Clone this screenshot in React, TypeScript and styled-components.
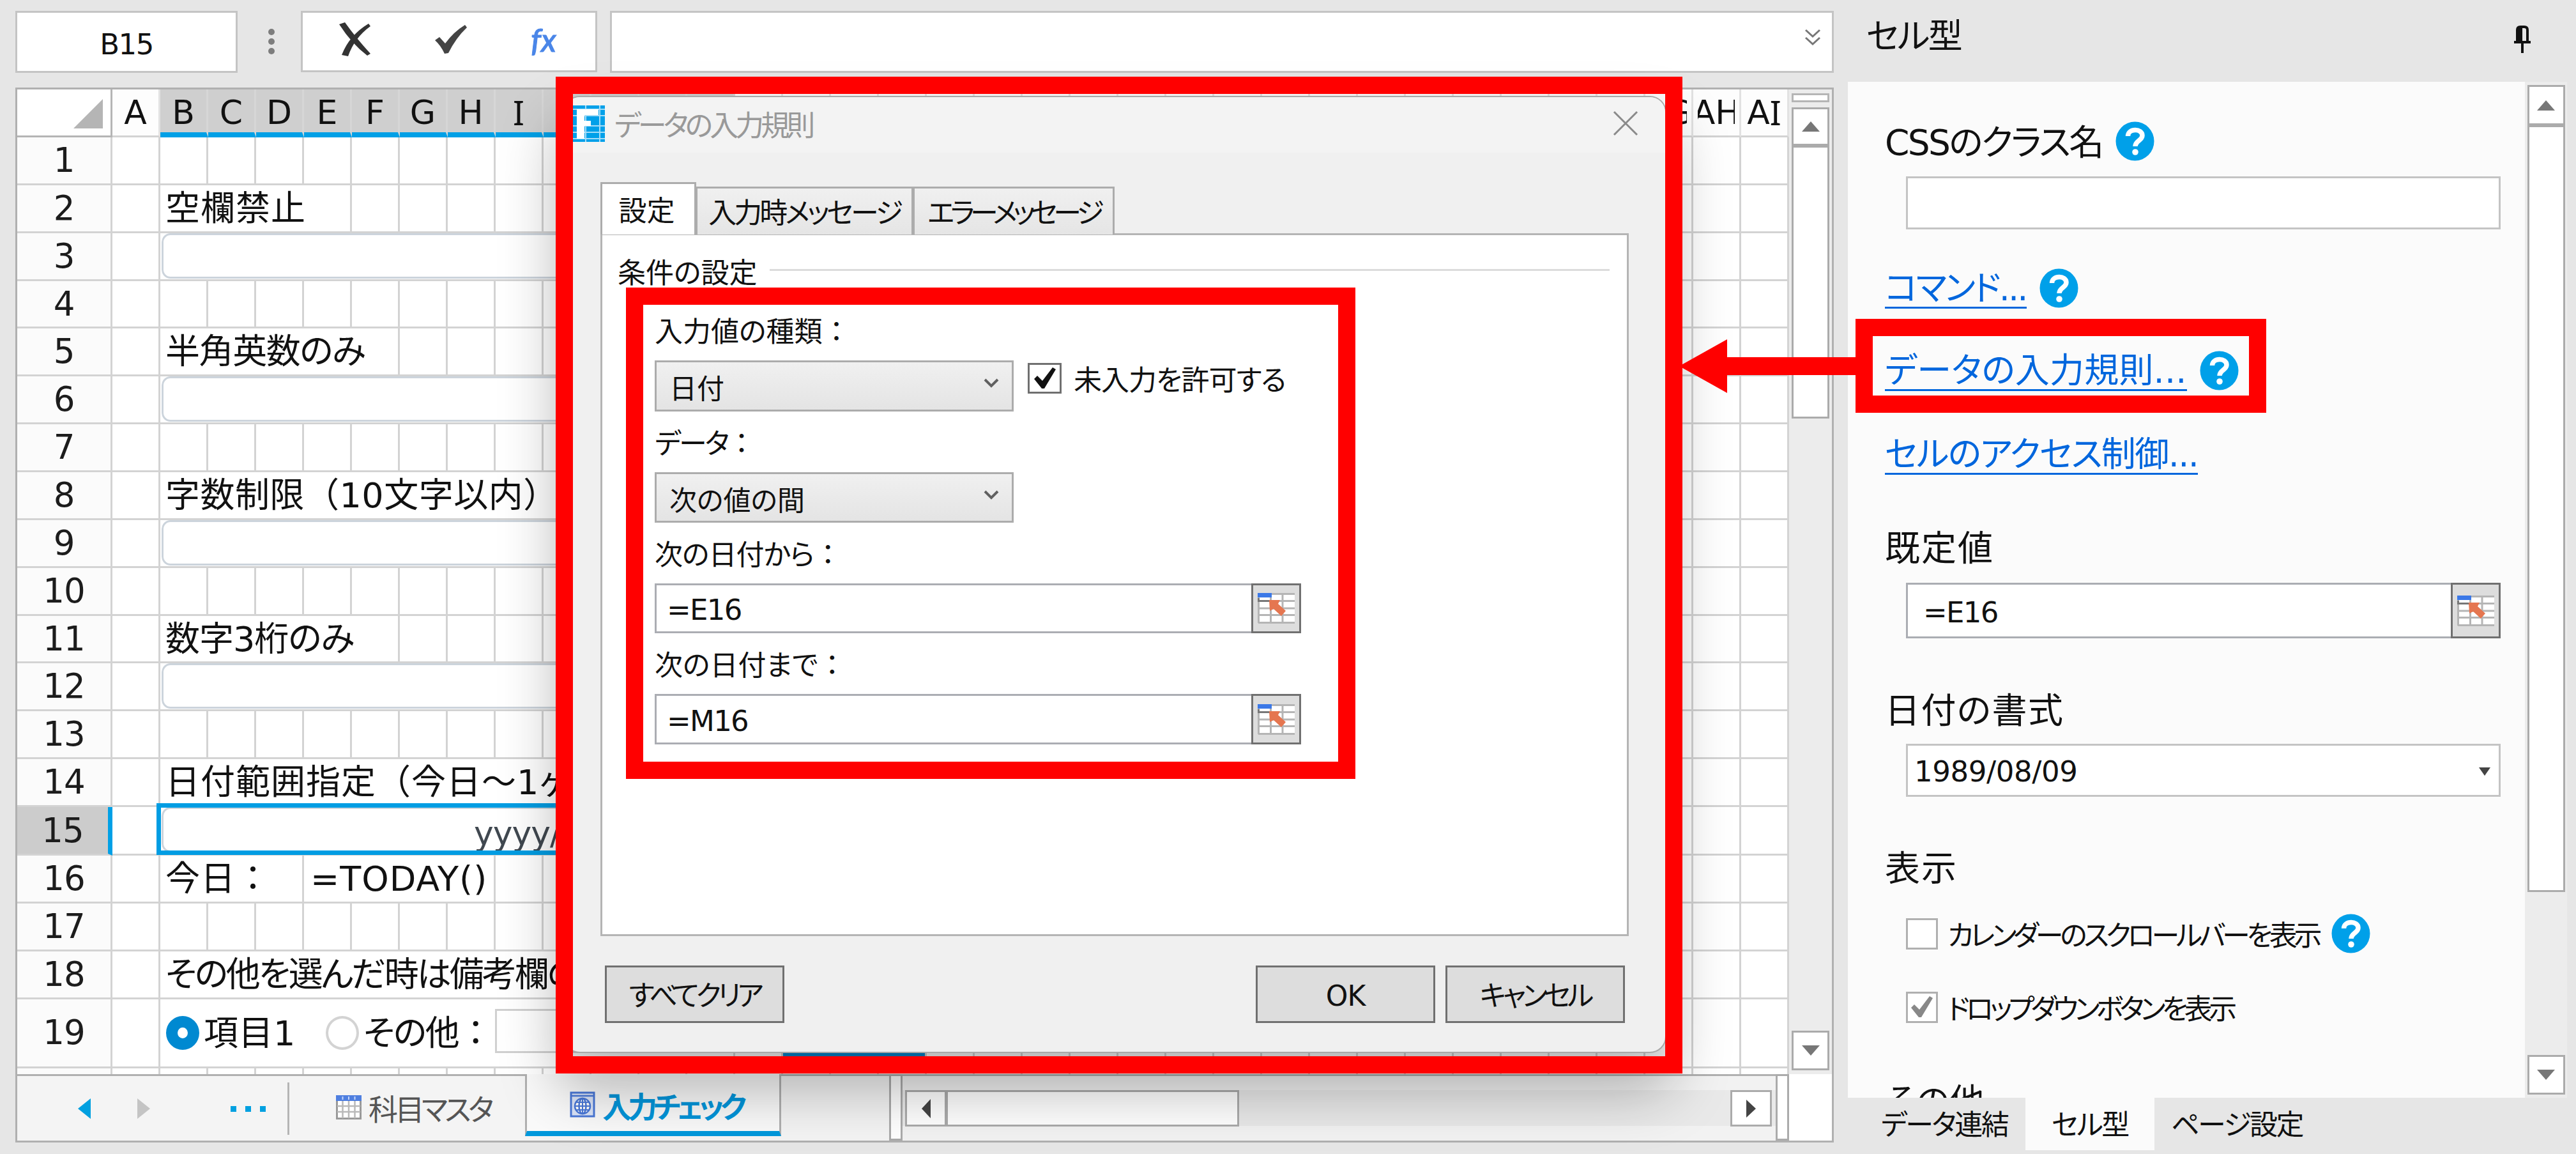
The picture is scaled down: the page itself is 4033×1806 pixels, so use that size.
import { Fragment, type ReactNode } from "react";
import styled, { createGlobalStyle, css } from "styled-components";

const GlobalStyle = createGlobalStyle`
  * { box-sizing: border-box; }
  body {
    margin: 0;
    background: #e6e6e6;
    font-family: "DejaVu Sans", "Noto Sans CJK JP", sans-serif;
    font-feature-settings: "palt";
    color: #111;
  }
`;

/* full-width punctuation keeps its whole em box */
const Wide = styled.span`
  font-feature-settings: "palt" 0;
`;

/* ---------- data ---------- */

type CellDef = { span: number; content?: ReactNode };

// J to AF sit behind the dialog and carry no label
const COLUMNS = [..."ABCDEFGHI", ...Array(23).fill(""), "AG", "AH", "AI"];

const rowCells: Record<number, CellDef[]> = {
  2: [{ span: 4, content: <CellText track={1}>空欄禁止</CellText> }],
  3: [{ span: 12, content: <CellInput /> }],
  5: [{ span: 5, content: <CellText track={-1.4}>半角英数のみ</CellText> }],
  6: [{ span: 12, content: <CellInput /> }],
  8: [{
    span: 9,
    content: <CellText track={0.5}>字数制限<Wide>（</Wide>10文字以内<Wide>）</Wide></CellText>,
  }],
  9: [{ span: 12, content: <CellInput /> }],
  11: [{ span: 5, content: <CellText track={-1}>数字3桁のみ</CellText> }],
  12: [{ span: 12, content: <CellInput /> }],
  14: [{
    span: 12,
    content: <CellText track={1}>日付範囲指定<Wide>（</Wide>今日～1ヶ月</CellText>,
  }],
  15: [{ span: 12, content: <CellInput>yyyy/</CellInput> }],
  16: [
    { span: 3, content: <CellText track={1}>今日<Wide>：</Wide></CellText> },
    { span: 4, content: <CellText track={1} indent={2}>=TODAY()</CellText> },
    { span: 1 },
    { span: 4, content: <CellText indent={2}>：</CellText> },
  ],
  18: [{ span: 12, content: <CellText track={-3}>その他を選んだ時は備考欄の</CellText> }],
  19: [
    { span: 12, content: <OptionRow /> },
    { span: 1 },
    { span: 3, content: <SubmitButton /> },
  ],
};

/* ---------- page ---------- */

export default function App() {
  return (
    <>
      <GlobalStyle />
      <Page>
        <Workspace>
          <FormulaBar />
          <SheetFrame>
            <SheetTop>
              <Grid />
              <VBar>
                <SplitBox />
                <ArrowBox $h={60}><Triangle dir="up" /></ArrowBox>
                <VThumb $h={427} />
                <Spring />
                <ArrowBox $h={62}><Triangle dir="down" /></ArrowBox>
              </VBar>
            </SheetTop>
            <SheetTabs />
          </SheetFrame>
        </Workspace>
        <SidePanel />
        <Dialog />
        <OuterFrame />
        <LinkFrame />
        <ArrowSvg width="290" height="84" viewBox="0 0 290 84">
          <path d="M14 42 L89 0 V28 H290 V56 H89 V84 Z" fill="#f00" />
        </ArrowSvg>
      </Page>
    </>
  );
}

function FormulaBar() {
  return (
    <Bar>
      <NameBox>B15</NameBox>
      <Dots><i /><i /><i /></Dots>
      <BarButtons>
        <svg width="50" height="54" viewBox="0 0 50 54">
          <path d="M0 3 L9 0 Q26 24 49 49 L44 52 Q20 34 0 3Z" fill="#333" />
          <path d="M49 6 Q24 24 14 53 L4 51 Q16 20 46 2Z" fill="#333" />
        </svg>
        <svg width="52" height="46" viewBox="0 0 52 46">
          <path d="M1 24 L8 19 L17 29 Q30 11 48 0 L51 4 Q34 20 22 44 L16 45 Q10 32 1 24Z" fill="#444" />
        </svg>
        <FxMark>fx</FxMark>
      </BarButtons>
      <FormulaBox>
        <svg width="28" height="28" viewBox="0 0 28 28">
          <path d="M3 2 L14 12 L25 2 M3 14 L14 24 L25 14" fill="none" stroke="#777" strokeWidth="3" />
        </svg>
      </FormulaBox>
    </Bar>
  );
}

function Grid() {
  const rows = Array.from({ length: 20 }, (_, i) => i + 1);
  return (
    <GridBox>
      <Corner>
        <svg width="46" height="46" viewBox="0 0 46 46"><path d="M46 0 V46 H0 Z" fill="#b5b5b5" /></svg>
      </Corner>
      {COLUMNS.map((name, i) => (
        <ColHead key={i} $on={i >= 1 && i <= 12}>
          <span>{[...name].map((c, k) => (c === "I" ? <SerifI key={k}>I</SerifI> : c))}</span>
        </ColHead>
      ))}
      {rows.map((row) => {
        const defs = rowCells[row] || [];
        const used = defs.reduce((sum, d) => sum + d.span, 1);
        return (
          <Fragment key={row}>
            <RowHead $on={row === 15}>{row < 20 ? row : ""}</RowHead>
            <Cell $span={1} />
            {defs.map((d, i) => <Cell key={i} $span={d.span}>{d.content}</Cell>)}
            {Array.from({ length: 35 - used }, (_, i) => <Cell key={"e" + i} $span={1} />)}
          </Fragment>
        );
      })}
      <Selection />
    </GridBox>
  );
}

function CellText({ children, track = 0, indent = 0 }: { children: ReactNode; track?: number; indent?: number }) {
  return <CellLabel $track={track} $indent={indent}>{children}</CellLabel>;
}

function CellInput({ children }: { children?: ReactNode }) {
  return <RoundedInput>{children}</RoundedInput>;
}

function OptionRow() {
  return (
    <Options>
      <Radio $on />
      <OptionText $w={198} $track={0.5}>項目1</OptionText>
      <Radio />
      <OptionText $w={213} $track={-2}>その他<Wide>：</Wide></OptionText>
      <NoteBox />
    </Options>
  );
}

function SubmitButton() {
  return <SubmitFace />;
}

function SheetTabs() {
  return (
    <TabsBar>
      <Nav>
        <svg width="20" height="32" viewBox="0 0 20 32"><path d="M20 0 V32 L0 16Z" fill="#00a0e0" /></svg>
        <svg width="20" height="32" viewBox="0 0 20 32"><path d="M0 0 V32 L20 16Z" fill="#c4c4c4" /></svg>
        <More><i /><i /><i /></More>
        <NavRule />
      </Nav>
      <SheetTab>
        <svg width="40" height="38" viewBox="0 0 40 38">
          <rect x="1.5" y="1.5" width="37" height="35" fill="#fff" stroke="#999" strokeWidth="3" />
          <path d="M10.500 9 V36 M20 9 V36 M29.500 9 V36 M2 17 H38 M2 26 H38" stroke="#b9b9b9" strokeWidth="2.500" />
          <rect width="40" height="9" fill="#4f7fe0" />
          <path d="M10.500 2 V7 M20 2 V7 M29.500 2 V7" stroke="#c5d6fa" strokeWidth="2" />
        </svg>
        科目マスタ
      </SheetTab>
      <SheetTab $on>
        <svg width="40" height="41" viewBox="0 0 40 41">
          <rect x="2" y="2" width="36" height="37" fill="#dbe4f8" stroke="#4a78d8" strokeWidth="3" />
          <path d="M2 7 H38" stroke="#4a78d8" strokeWidth="2.500" />
          <circle cx="20" cy="23" r="12" fill="#fff" stroke="#4a78d8" strokeWidth="2.500" />
          <ellipse cx="20" cy="23" rx="5.500" ry="12" fill="none" stroke="#4a78d8" strokeWidth="2.500" />
          <path d="M20 11 V35 M8 23 H32 M10 17 H30 M10 29 H30" stroke="#4a78d8" strokeWidth="2" />
        </svg>
        入力チェック
      </SheetTab>
      <TabGap />
      <Splitter />
      <HBar>
        <HArrow><Triangle dir="left" /></HArrow>
        <HThumb />
        <Spring />
        <HArrow><Triangle dir="right" /></HArrow>
      </HBar>
      <Splitter />
      <TabsEnd />
    </TabsBar>
  );
}

function Triangle({ dir }: { dir: "up" | "down" | "left" | "right" }) {
  const shapes = {
    up: [28, 16, "M14 0 L28 16 H0Z", "#777"],
    down: [28, 16, "M0 0 H28 L14 16Z", "#777"],
    left: [14, 30, "M14 0 V30 L0 15Z", "#444"],
    right: [15, 28, "M0 0 V28 L15 14Z", "#444"],
  } as const;
  const [w, h, d, fill] = shapes[dir];
  return <svg width={w} height={h} viewBox={`0 0 ${w} ${h}`}><path d={d} fill={fill} /></svg>;
}

function Help() {
  return (
    <HelpIcon width="61" height="62" viewBox="0 0 61 62">
      <ellipse cx="30.500" cy="31" rx="30" ry="30.500" fill="#00a0e9" />
      <path d="M19.500 23 C19.500 10.500 42 10.500 42 22 C42 30 31 30 31 39" fill="none" stroke="#fff" strokeWidth="7.500" />
      <circle cx="31" cy="48" r="4.800" fill="#fff" />
    </HelpIcon>
  );
}

function RangePicker() {
  return (
    <PickerButton>
      <svg width="58" height="48" viewBox="0 0 58 48">
        <rect x="1" y="1" width="57" height="46" fill="#fff" />
        <path d="M1.500 1 V47 M20.500 1 V47 M39 1 V47 M1 1.500 H58 M1 12.500 H58 M1 24 H58 M1 34.500 H58 M1 46.500 H58" stroke="#b5b5b5" strokeWidth="3" />
        <path d="M1.500 8 V12.500 H22" fill="none" stroke="#777" strokeWidth="3" />
        <rect width="22" height="7" fill="#3b78e7" />
        <path d="M18 11 H35 L32 17 L44 28 L37 36 L25 25 L19 28Z" fill="#e57650" />
      </svg>
    </PickerButton>
  );
}

function Check({ color }: { color: string }) {
  return (
    <svg width="38" height="36" viewBox="0 0 38 36">
      <path d="M2 19 L7 14 L15 22 L31 1 L36 4 L18 34 L14 34Z" fill={color} />
    </svg>
  );
}

function Chevron() {
  return (
    <svg width="24" height="18" viewBox="0 0 24 18">
      <path d="M2 3 L12 13 L22 3" fill="none" stroke="#606060" strokeWidth="4" />
    </svg>
  );
}

/* ---------- dialog ---------- */

function Dialog() {
  return (
    <DialogBox>
      <TitleBar>
        <svg width="56" height="57" viewBox="0 0 56 57">
          <rect width="56" height="57" fill="#00a0e9" />
          <path d="M26 0 V57 M48 0 V57 M0 6 H56 M0 16 H56 M0 32 H56 M0 42 H56 M0 52 H56" stroke="#a5dcf7" strokeWidth="2" />
          <path d="M12 6 H46 V15 H24 V24 H34 V32 H24 V52 H12Z" fill="#fff" />
        </svg>
        <span>データの入力規則</span>
        <svg width="40" height="40" viewBox="0 0 40 40">
          <path d="M2 2 L38 38 M38 2 L2 38" stroke="#8a8a8a" strokeWidth="3" />
        </svg>
      </TitleBar>
      <DialogBody>
        <TabStrip>
          <Tab $on $w={150}>設定</Tab>
          <Tab $w={341} $track={-4}>入力時メッセージ</Tab>
          <Tab $w={316} $track={-6.6}>エラーメッセージ</Tab>
        </TabStrip>
        <TabPanel>
          <Legend>条件の設定</Legend>
          <Fields>
            <Label>入力値の種類<Wide>：</Wide></Label>
            <Line>
              <Select $h={80}>日付<Chevron /></Select>
              <AllowBlank>
                <DialogCheck><Check color="#111" /></DialogCheck>
                未入力を許可する
              </AllowBlank>
            </Line>
            <Label $track={-3}>データ<Wide>：</Wide></Label>
            <Select $h={79}>次の値の間<Chevron /></Select>
            <Label $track={-1}>次の日付から<Wide>：</Wide></Label>
            <RangeField $w={1012} $h={78}><span>=E16</span><RangePicker /></RangeField>
            <Label>次の日付まで<Wide>：</Wide></Label>
            <RangeField $w={1012} $h={79}><span>=M16</span><RangePicker /></RangeField>
          </Fields>
        </TabPanel>
        <Footer>
          <Button $track={-5.2}>すべてクリア</Button>
          <Spring />
          <Button $track={-1}>OK</Button>
          <Button $track={-5.2}>キャンセル</Button>
        </Footer>
      </DialogBody>
      <FieldsFrame />
    </DialogBox>
  );
}

/* ---------- right side ---------- */

function SidePanel() {
  return (
    <Side>
      <SideHead>
        <span>セル型</span>
        <svg width="26" height="43" viewBox="0 0 26 43">
          <path d="M5 25 V7 Q5 2 10 2 H16 Q21 2 21 7 V25 M0 26 H26 M13 26 V43" fill="none" stroke="#111" strokeWidth="4" />
          <path d="M5 3 H13 V26 H5Z" fill="#111" />
        </svg>
      </SideHead>
      <SideBody>
        <Props>
          <PropRow $top={62}><Heading $track={-2.6}>CSSのクラス名</Heading><Help /></PropRow>
          <PlainInput />
          <PropRow $top={61}><Link $track={-2.9}>コマンド...</Link><Help /></PropRow>
          <PropRow $top={67}><Link $track={0.2}>データの入力規則...</Link><Help /></PropRow>
          <PropRow $top={69}><Link $track={-1.6}>セルのアクセス制御...</Link></PropRow>
          <PropRow $top={83}><Heading $track={2}>既定値</Heading></PropRow>
          <RangeField $w={931} $h={87} $side><span>=E16</span><RangePicker /></RangeField>
          <PropRow $top={80}><Heading $track={1.5}>日付の書式</Heading></PropRow>
          <FormatSelect>
            1989/08/09
            <svg width="18" height="13" viewBox="0 0 18 13"><path d="M0 0 H18 L9 13Z" fill="#444" /></svg>
          </FormatSelect>
          <PropRow $top={79}><Heading $track={2}>表示</Heading></PropRow>
          <PropRow $top={42} $sub>
            <SideCheck />
            <SubText $track={-5.2}>カレンダーのスクロールバーを表示</SubText>
            <Help />
          </PropRow>
          <PropRow $top={53} $sub>
            <SideCheck><Check color="#888" /></SideCheck>
            <SubText $track={-5.6}>ドロップダウンボタンを表示</SubText>
          </PropRow>
          <PropRow $top={84}><Heading $track={-1}>その他</Heading></PropRow>
        </Props>
        <SideBar>
          <ArrowBox $h={63}><Triangle dir="up" /></ArrowBox>
          <VThumb $h={1200} />
          <Spring />
          <ArrowBox $h={62}><Triangle dir="down" /></ArrowBox>
        </SideBar>
      </SideBody>
      <SideTabs>
        <SideTab $w={278}>データ連結</SideTab>
        <SideTab $w={202} $on>セル型</SideTab>
        <SideTab $w={258}>ページ設定</SideTab>
      </SideTabs>
    </Side>
  );
}

/* ---------- styles: shell ---------- */

const Page = styled.div`
  position: relative;
  display: flex;
  width: 4033px;
  height: 1806px;
  overflow: hidden;
  background: #e6e6e6;
`;

const Workspace = styled.div`
  width: 2893px;
  flex: none;
  padding: 17px 22px 0 24px;
`;

const Spring = styled.div`
  flex: 1;
`;

const redFrame = css`
  position: absolute;
  border: 27px solid #f00;
`;

const OuterFrame = styled.div`
  ${redFrame}
  left: 870px;
  top: 120px;
  width: 1764px;
  height: 1560px;
`;

const LinkFrame = styled.div`
  ${redFrame}
  left: 2905px;
  top: 499px;
  width: 643px;
  height: 147px;
`;

const ArrowSvg = styled.svg`
  position: absolute;
  left: 2615px;
  top: 531px;
`;

const Bar = styled.div`
  display: flex;
  height: 97px;
`;

const box = css`
  border: 3px solid #c4c4c4;
  background: #fff;
`;

const NameBox = styled.div`
  ${box}
  width: 348px;
  padding-top: 6px;
  text-align: center;
  font-size: 45px;
  line-height: 88px;
  letter-spacing: -1.5px;
`;

const Dots = styled.div`
  display: flex;
  flex-direction: column;
  align-items: center;
  gap: 5px;
  width: 99px;
  padding: 28px 0 0 6px;

  i {
    width: 10px;
    height: 10px;
    border-radius: 50%;
    background: #7d7d7d;
  }
`;

const BarButtons = styled.div`
  ${box}
  display: flex;
  align-items: center;
  gap: 99px;
  width: 464px;
  height: 96px;
  padding: 0 0 6px 57px;
`;

const FxMark = styled.span`
  font: italic 500 50px Lato, sans-serif;
  -webkit-text-stroke: 1px #4a86e8;
  color: #4a86e8;
`;

const FormulaBox = styled.div`
  ${box}
  flex: 1;
  display: flex;
  justify-content: flex-end;
  margin-left: 20px;
  padding: 25px 16px 0 0;
`;

/* ---------- styles: sheet ---------- */

const SheetFrame = styled.div`
  width: 2847px;
  height: 1651px;
  margin-top: 23px;
  border: 3px solid #b0b0b0;
  background: #fff;
`;

const SheetTop = styled.div`
  display: flex;
  height: 1541px;
`;

const GridBox = styled.div`
  position: relative;
  display: grid;
  grid-template-columns: 149px repeat(35, 75px);
  grid-template-rows: 75px repeat(14, 74.87px) 76px 75px 75px 75px 107.5px 75px;
  width: 2774px;
  overflow: hidden;
`;

const Corner = styled.div`
  display: flex;
  justify-content: flex-end;
  padding: 15px 12px 0 0;
  border-right: 3px solid #b5b5b5;
  border-bottom: 3px solid #b5b5b5;
`;

const ColHead = styled.div<{ $on: boolean }>`
  display: flex;
  justify-content: center;
  border-right: 3px solid ${(p) => (p.$on ? "#d6d6d6" : "#e2e2e2")};
  border-bottom: ${(p) => (p.$on ? "8px solid #00a0e6" : "3px solid #d3d3d3")};
  background: ${(p) => (p.$on ? "#cfcfcf" : "#fdfdfd")};
  font-size: 52px;
  line-height: 72px;

  span {
    display: flex;
    justify-content: center;
    width: 58px;
    overflow: hidden;
  }
`;

const SerifI = styled.b`
  font-family: "Noto Sans", sans-serif;
  font-size: 53px;
  font-weight: normal;
`;

const RowHead = styled.div<{ $on: boolean }>`
  display: flex;
  align-items: center;
  justify-content: center;
  border-right: ${(p) => (p.$on ? "7px solid #00a0e6" : "3px solid #d3d3d3")};
  border-bottom: 3px solid #d3d3d3;
  background: ${(p) => (p.$on ? "#cccccc" : "#fbfbfb")};
  font-size: 53px;
  line-height: 60px;
  letter-spacing: -1px;
  color: #1c1c1c;
`;

const Cell = styled.div<{ $span: number }>`
  grid-column: span ${(p) => p.$span};
  min-width: 0;
  overflow: hidden;
  border-right: 3px solid #d3d3d3;
  border-bottom: 3px solid #d3d3d3;
`;

const CellLabel = styled.div<{ $track: number; $indent: number }>`
  padding-left: ${(p) => 8 + p.$indent}px;
  font-size: 54px;
  line-height: 74px;
  letter-spacing: ${(p) => p.$track}px;
  white-space: nowrap;
`;

const RoundedInput = styled.div`
  height: 71px;
  margin-left: 2px;
  padding-left: 486px;
  border: 3px solid #ccd4dc;
  border-radius: 14px;
  background: #fff;
  font-size: 52px;
  line-height: 76px;
  letter-spacing: -1px;
  color: #404850;
`;

const Selection = styled.div`
  position: absolute;
  left: 218px;
  top: 1117px;
  width: 909px;
  height: 81px;
  border: 7px solid #009de3;
`;

const Options = styled.div`
  display: flex;
  align-items: center;
  height: 105px;
  padding-left: 9px;
`;

const Radio = styled.div<{ $on?: boolean }>`
  width: 52px;
  height: 53px;
  flex: none;
  border: ${(p) => (p.$on ? "18px solid #0089d1" : "4px solid #d3d3d3")};
  border-radius: 50%;
  background: #fff;
`;

const OptionText = styled.div<{ $w: number; $track: number }>`
  width: ${(p) => p.$w}px;
  flex: none;
  padding: 2px 0 0 7px;
  font-size: 54px;
  line-height: 60px;
  letter-spacing: ${(p) => p.$track}px;
  white-space: nowrap;
`;

const NoteBox = styled.div`
  width: 233px;
  height: 69px;
  margin-bottom: 6px;
  border: 3px solid #d0d0d0;
  background: #fff;
`;

const SubmitFace = styled.div`
  height: 98px;
  background: #0089d1;
`;

const VBar = styled.div`
  display: flex;
  flex-direction: column;
  align-items: center;
  width: 67px;
  padding: 6px 4px;
  background: #ececec;
`;

const SplitBox = styled.div`
  width: 59px;
  height: 14px;
  margin-bottom: 8px;
  border: 3px solid #b5b5b5;
  background: #fff;
`;

const ArrowBox = styled.div<{ $h: number }>`
  display: flex;
  align-items: center;
  justify-content: center;
  width: 59px;
  height: ${(p) => p.$h}px;
  border: 3px solid #ababab;
  background: #fff;
`;

const VThumb = styled.div<{ $h: number }>`
  width: 59px;
  height: ${(p) => p.$h}px;
  border: 3px solid #ababab;
  background: #fff;
`;

const TabsBar = styled.div`
  display: flex;
  height: 104px;
  background: #f4f4f4;
`;

const Nav = styled.div`
  display: flex;
  align-items: center;
  width: 426px;
  padding-left: 95px;
  border-top: 3px solid #b0b0b0;

  svg + svg {
    margin-left: 73px;
  }
`;

const More = styled.div`
  display: flex;
  gap: 14px;
  margin: 2px 0 0 126px;

  i {
    width: 9px;
    height: 9px;
    background: #00a0e0;
  }
`;

const NavRule = styled.div`
  width: 3px;
  height: 82px;
  margin-left: auto;
  background: #b5b5b5;
`;

const SheetTab = styled.div<{ $on?: boolean }>`
  display: flex;
  align-items: center;
  gap: 11px;
  width: ${(p) => (p.$on ? 401 : 369)}px;
  height: ${(p) => (p.$on ? 97 : 104)}px;
  padding: ${(p) => (p.$on ? "6px 0 0 67px" : "0 0 4px 73px")};
  border: 0 solid #b0b0b0;
  border-top-width: ${(p) => (p.$on ? 0 : 3)}px;
  ${(p) =>
    p.$on &&
    css`
      border-left-width: 3px;
      border-right-width: 3px;
      border-bottom: 8px solid #0098dc;
      background: #fafafa;
      font-weight: bold;
    `}
  color: ${(p) => (p.$on ? "#0095da" : "#555")};
  font-size: 46px;
  letter-spacing: ${(p) => (p.$on ? -6 : -4.6)}px;
  white-space: nowrap;
`;

const TabGap = styled.div`
  width: 169px;
  border-top: 3px solid #b0b0b0;
`;

const Splitter = styled.div`
  width: 21px;
  flex: none;
  border: 3px solid #ababab;
  background: #fff;
`;

const HBar = styled.div`
  display: flex;
  flex: 1;
  padding: 22px 6px 22px 4px;
  border-top: 3px solid #b0b0b0;
  background: linear-gradient(#f2f2f2 22px, #e9e9e9 22px, #e9e9e9 78px, #f2f2f2 78px);
`;

const HArrow = styled.div`
  display: flex;
  align-items: center;
  justify-content: center;
  width: 65px;
  border: 3px solid #ababab;
  background: #fff;
`;

const HThumb = styled.div`
  width: 459px;
  margin-left: -1px;
  border: 3px solid #ababab;
  background: #fff;
`;

const TabsEnd = styled.div`
  width: 67px;
  background: #fff;
`;

/* ---------- styles: dialog ---------- */

const DialogBox = styled.div`
  position: absolute;
  left: 884px;
  top: 152px;
  width: 1723px;
  height: 1494px;
  border-radius: 24px;
  background: #f0f0f0;
  box-shadow: 0 0 0 2px #a8a8a8, 0 50px 90px 12px rgba(0, 0, 0, 0.28);
`;

const TitleBar = styled.div`
  display: flex;
  align-items: center;
  height: 87px;
  padding: 0 42px 5px 7px;
  border-radius: 24px 24px 0 0;
  background: #f3f3f3;
  color: #999;
  font-size: 45px;
  letter-spacing: -5px;

  span {
    flex: 1;
    padding-left: 15px;
  }
`;

const DialogBody = styled.div`
  padding: 46px 57px 0 56px;
`;

const TabStrip = styled.div`
  display: flex;
  align-items: flex-end;
  height: 82px;
`;

const Tab = styled.div<{ $on?: boolean; $w: number; $track?: number }>`
  width: ${(p) => p.$w}px;
  height: ${(p) => (p.$on ? 82 : 75)}px;
  margin-left: ${(p) => (p.$on ? 0 : -1)}px;
  padding: ${(p) => (p.$on ? "7px 5px 0 0" : "3px 0 0")};
  border: 3px solid #acacac;
  border-bottom: 0;
  background: ${(p) => (p.$on ? "#fff" : "linear-gradient(#f0f0f0, #e5e5e5)")};
  text-align: center;
  font-size: 44px;
  line-height: 72px;
  letter-spacing: ${(p) => p.$track || 0}px;
  white-space: nowrap;
`;

const TabPanel = styled.div`
  height: 1100px;
  margin-top: -2px;
  padding: 26px 27px 0 24px;
  border: 3px solid #b4b4b4;
  background: #fff;
`;

const Legend = styled.div`
  display: flex;
  align-items: center;
  height: 60px;
  font-size: 44px;
  white-space: nowrap;

  &::after {
    content: "";
    flex: 1;
    height: 3px;
    margin: -3px 0 0 20px;
    background: #dcdcdc;
  }
`;

const Fields = styled.div`
  padding: 17px 0 0 58px;
`;

const Label = styled.div<{ $track?: number }>`
  height: 60px;
  margin: 19px 0 16px;
  font-size: 44px;
  line-height: 64px;
  letter-spacing: ${(p) => p.$track || 0}px;

  &:first-child {
    margin-top: 17px;
  }
`;

const Line = styled.div`
  display: flex;
`;

const Select = styled.div<{ $h: number }>`
  display: flex;
  align-items: center;
  justify-content: space-between;
  width: 562px;
  height: ${(p) => p.$h}px;
  padding: 2px 20px 0 20px;
  border: 3px solid #acacac;
  background: linear-gradient(#f0f0f0, #e4e4e4);
  font-size: 43px;

  svg {
    margin-bottom: 10px;
  }
`;

const AllowBlank = styled.div`
  display: flex;
  align-items: center;
  height: 56px;
  padding-left: 22px;
  font-size: 44px;
  letter-spacing: -1px;
`;

const DialogCheck = styled.div`
  display: flex;
  align-items: center;
  justify-content: center;
  width: 53px;
  height: 48px;
  margin-right: 19px;
  border: 3px solid #707070;
  background: #fff;
`;

const RangeField = styled.div<{ $w: number; $h: number; $side?: boolean }>`
  display: flex;
  width: ${(p) => p.$w}px;
  height: ${(p) => p.$h}px;
  margin: ${(p) => (p.$side ? "25px 0 0 33px" : 0)};
  font-size: 45px;
  letter-spacing: -1.7px;

  > span {
    flex: 1;
    padding: 3px 0 0 ${(p) => (p.$side ? 24 : 16)}px;
    border: 3px solid #abadb3;
    border-right: 0;
    background: #fff;
    line-height: ${(p) => p.$h - 6}px;
  }
`;

const PickerButton = styled.div`
  display: flex;
  align-items: center;
  justify-content: center;
  width: 78px;
  border: 3px solid #707070;
  background: #ddd;
`;

const Footer = styled.div`
  display: flex;
  gap: 16px;
  padding: 46px 6px 0 7px;
`;

const Button = styled.div<{ $track: number }>`
  width: 281px;
  height: 90px;
  padding-top: 4px;
  border: 3px solid #707070;
  background: #ddd;
  text-align: center;
  font-size: 44px;
  line-height: 82px;
  letter-spacing: ${(p) => p.$track}px;
`;

const FieldsFrame = styled.div`
  ${redFrame}
  left: 96px;
  top: 298px;
  width: 1142px;
  height: 769px;
`;

/* ---------- styles: side panel ---------- */

const Side = styled.div`
  flex: none;
  width: 1126px;
`;

const SideHead = styled.div`
  display: flex;
  justify-content: space-between;
  height: 128px;
  padding: 22px 57px 0 29px;
  font-size: 54px;
  line-height: 72px;
  letter-spacing: -2.6px;

  svg {
    margin-top: 18px;
  }
`;

const SideBody = styled.div`
  display: flex;
  height: 1590px;
  background: #fbfbfb;
  overflow: hidden;
`;

const Props = styled.div`
  flex: 1;
  padding-left: 58px;
`;

const PropRow = styled.div<{ $top: number; $sub?: boolean }>`
  display: flex;
  align-items: center;
  height: 62px;
  margin-top: ${(p) => p.$top}px;
  padding-left: ${(p) => (p.$sub ? 33 : 0)}px;
  white-space: nowrap;
`;

const Heading = styled.span<{ $track: number }>`
  padding-top: 3px;
  font-size: 55px;
  line-height: 62px;
  letter-spacing: ${(p) => p.$track}px;
`;

const Link = styled.span<{ $track: number }>`
  padding-top: 4px;
  border-bottom: 3px solid #0066dd;
  color: #0066dd;
  font-size: 54px;
  line-height: 56px;
  letter-spacing: ${(p) => p.$track}px;
`;

const SubText = styled.span<{ $track: number }>`
  font-size: 44px;
  letter-spacing: ${(p) => p.$track}px;
`;

const HelpIcon = styled.svg`
  flex: none;
  margin-left: 20px;
`;

const PlainInput = styled.div`
  ${box}
  width: 931px;
  height: 83px;
  margin: 24px 0 0 33px;
`;

const FormatSelect = styled.div`
  ${box}
  display: flex;
  align-items: center;
  justify-content: space-between;
  width: 931px;
  height: 83px;
  margin: 23px 0 0 33px;
  padding: 4px 13px 0 10px;
  font-size: 45px;
  letter-spacing: -0.4px;
`;

const SideCheck = styled.div`
  display: flex;
  align-items: center;
  justify-content: center;
  width: 50px;
  height: 49px;
  margin-right: 15px;
  border: 3px solid #b0b0b0;
  background: #fff;
`;

const SideBar = styled.div`
  display: flex;
  flex-direction: column;
  align-items: center;
  width: 66px;
  padding: 5px 0;
  background: #ececec;
`;

const SideTabs = styled.div`
  display: flex;
  height: 82px;
`;

const SideTab = styled.div<{ $w: number; $on?: boolean }>`
  width: ${(p) => p.$w}px;
  background: ${(p) => (p.$on ? "#fbfbfb" : "none")};
  text-align: center;
  font-size: 44px;
  line-height: 86px;
  letter-spacing: -2.5px;

  &:first-child {
    padding-left: 24px;
  }
`;
